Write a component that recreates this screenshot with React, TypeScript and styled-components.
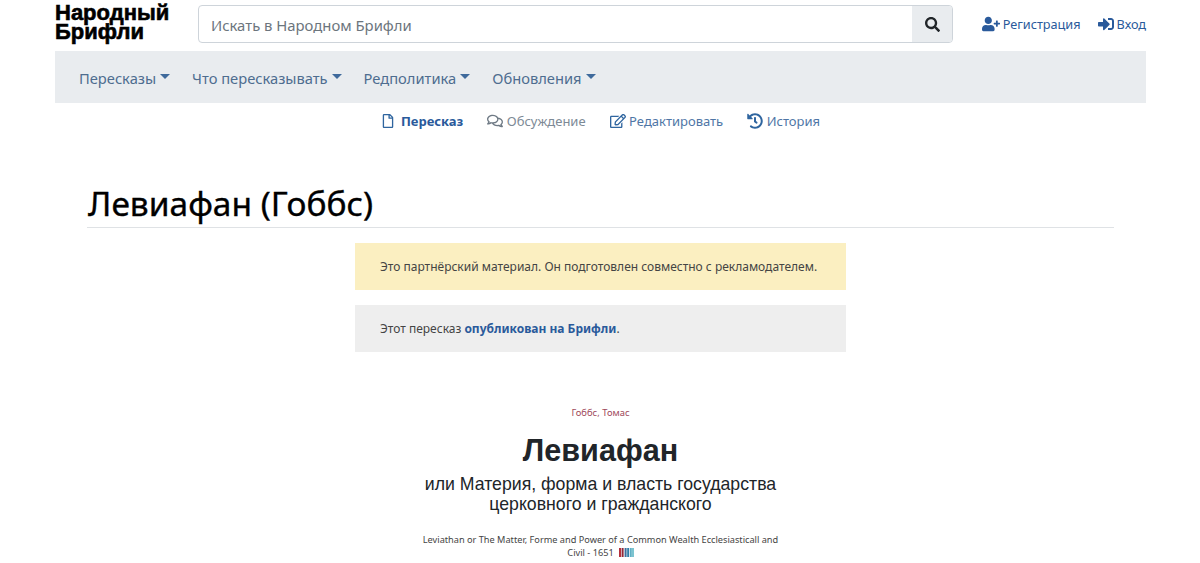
import React from "react";
import styled, { createGlobalStyle } from "styled-components";
import {
  FaUserPlus,
  FaSignInAlt,
  FaSearch,
  FaRegFile,
  FaRegComments,
  FaRegEdit,
  FaHistory,
} from "react-icons/fa";

const GlobalStyle = createGlobalStyle`
  html, body {
    margin: 0;
    padding: 0;
    background: #fff;
    overflow: hidden;
    height: 563px;
  }
  body {
    font-family: "Noto Sans", "Open Sans", sans-serif;
    color: #212529;
  }
  * { box-sizing: border-box; }
`;

const Page = styled.div`
  width: 1091px;
  margin-left: 55px;
  display: flex;
  flex-direction: column;
`;

const Header = styled.header`
  height: 51px;
  display: flex;
  align-items: flex-start;
`;

const Logo = styled.div`
  width: 143px;
  padding-top: 4px;
  font-family: "Liberation Sans", Arial, sans-serif;
  font-weight: 700;
  font-size: 22px;
  line-height: 18.5px;
  color: #000;
  -webkit-text-stroke: 0.6px #000;
`;

const SearchBox = styled.div`
  width: 755px;
  height: 38px;
  margin-top: 5px;
  display: flex;
  border: 1px solid #ced4da;
  border-radius: 4px;
  overflow: hidden;
`;

const SearchInput = styled.div`
  flex: 1;
  padding-left: 12px;
  font-size: 14.85px;
  line-height: 38px;
  color: #6c757d;
`;

const SearchButton = styled.div`
  width: 40px;
  background: #e9ecef;
  display: flex;
  align-items: center;
  justify-content: center;
  color: #212529;
  font-size: 15px;
`;

const UserLinks = styled.div`
  margin-left: auto;
  display: flex;
  gap: 17px;
  padding-top: 15px;
`;

const UserLink = styled.a`
  display: flex;
  align-items: center;
  gap: 3px;
  font-size: 12.7px;
  line-height: 18px;
  color: #2a5a9b;
`;

const NavBar = styled.nav`
  height: 52px;
  background: #e9ecef;
  display: flex;
  align-items: center;
  padding: 1px 0 0 24px;
  gap: 22px;
`;

const NavItem = styled.span`
  display: flex;
  align-items: center;
  font-size: 14.7px;
  color: #4e6d8f;
`;

const Caret = styled.i`
  display: inline-block;
  margin-left: 4px;
  margin-top: -3px;
  border-top: 5px solid #3f6a9c;
  border-left: 5px solid transparent;
  border-right: 5px solid transparent;
`;

const Tabs = styled.div`
  height: 36px;
  display: flex;
  justify-content: center;
  align-items: center;
  gap: 24px;
`;

const Tab = styled.a<{ $active?: boolean; $muted?: boolean }>`
  display: flex;
  align-items: center;
  gap: ${({ $active }) => ($active ? "6px" : "3.5px")};
  font-size: 13px;
  font-weight: ${({ $active }) => ($active ? 700 : 400)};
  color: ${({ $active, $muted }) =>
    $active ? "#2a5a9b" : $muted ? "#7d8a96" : "#4f76a6"};
  svg {
    font-size: ${({ $active }) => ($active ? "14px" : "16px")};
    color: ${({ $muted }) => ($muted ? "#6f7a85" : "#2f659f")};
  }
`;

const Content = styled.main`
  padding: 0 32px;
  display: flex;
  flex-direction: column;
`;

const Title = styled.h1`
  margin: 42px 0 0;
  height: 47px;
  padding-left: 1px;
  font-size: 33.5px;
  font-weight: 400;
  line-height: 44px;
  color: #000;
  border-bottom: 1px solid #dfe2e5;
  -webkit-text-stroke: 0.35px #000;
`;

const Notice = styled.div<{ $tone: "yellow" | "gray" }>`
  width: 491px;
  height: 47px;
  margin: 15px auto 0 268px;
  padding-left: 25px;
  font-size: 12px;
  line-height: 47px;
  color: #444;
  background: ${({ $tone }) => ($tone === "yellow" ? "#fbefc1" : "#eeeeee")};
  a {
    color: #2a5a9b;
    font-weight: 700;
  }
`;

const Cover = styled.section`
  width: 365px;
  margin: 54px auto 0;
  text-align: center;
`;

const Author = styled.div`
  font-size: 9.4px;
  line-height: 14px;
  color: #a04a5c;
`;

const BookTitle = styled.div`
  margin-top: 12px;
  font-family: "Liberation Sans", Arial, sans-serif;
  font-size: 30.6px;
  font-weight: 700;
  line-height: 36px;
  color: #212529;
`;

const Subtitle = styled.div`
  margin-top: 6px;
  font-family: "Liberation Sans", Arial, sans-serif;
  font-size: 17.7px;
  line-height: 20px;
  color: #212529;
  white-space: nowrap;
`;

const Original = styled.div`
  margin-top: 19px;
  font-size: 9.2px;
  line-height: 13px;
  color: #444;
`;

const Bars = styled.svg`
  display: inline-block;
  width: 15px;
  height: 9px;
  margin-left: 5px;
  vertical-align: -1px;
`;

const App = () => {
  return (
    <>
      <GlobalStyle />
      <Page>
        <Header>
          <Logo>
            Народный
            <br />
            Брифли
          </Logo>
          <SearchBox>
            <SearchInput>Искать в Народном Брифли</SearchInput>
            <SearchButton>
              <FaSearch />
            </SearchButton>
          </SearchBox>
          <UserLinks>
            <UserLink>
              <FaUserPlus size={18} />
              Регистрация
            </UserLink>
            <UserLink>
              <FaSignInAlt size={16} />
              Вход
            </UserLink>
          </UserLinks>
        </Header>
        <NavBar>
          {["Пересказы", "Что пересказывать", "Редполитика", "Обновления"].map(
            (item) => (
              <NavItem key={item}>
                {item}
                <Caret />
              </NavItem>
            ),
          )}
        </NavBar>
        <Tabs>
          <Tab $active>
            <FaRegFile />
            Пересказ
          </Tab>
          <Tab $muted>
            <FaRegComments />
            Обсуждение
          </Tab>
          <Tab>
            <FaRegEdit />
            Редактировать
          </Tab>
          <Tab>
            <FaHistory />
            История
          </Tab>
        </Tabs>
        <Content>
          <Title>Левиафан (Гоббс)</Title>
          <Notice $tone="yellow">
            Это партнёрский материал. Он подготовлен совместно с рекламодателем.
          </Notice>
          <Notice $tone="gray">
            Этот пересказ <a>опубликован на Брифли</a>.
          </Notice>
          <Cover>
            <Author>Гоббс, Томас</Author>
            <BookTitle>Левиафан</BookTitle>
            <Subtitle>
              или Материя, форма и власть государства
              <br />
              церковного и гражданского
            </Subtitle>
            <Original>
              Leviathan or The Matter, Forme and Power of a Common Wealth
              Ecclesiasticall and Civil - 1651
              <Bars viewBox="0 0 15 9">
                <rect x="0" width="2" height="9" fill="#b5303c" />
                <rect x="2.6" width="2" height="9" fill="#8f2a3a" />
                <rect x="5.6" width="2" height="9" fill="#3d6f9e" />
                <rect x="8.2" width="2" height="9" fill="#2f7fa8" />
                <rect x="11" width="1.8" height="9" fill="#5fb0c4" />
                <rect x="13" width="2" height="9" fill="#7cc4d0" />
              </Bars>
            </Original>
          </Cover>
        </Content>
      </Page>
    </>
  );
};

export default App;
